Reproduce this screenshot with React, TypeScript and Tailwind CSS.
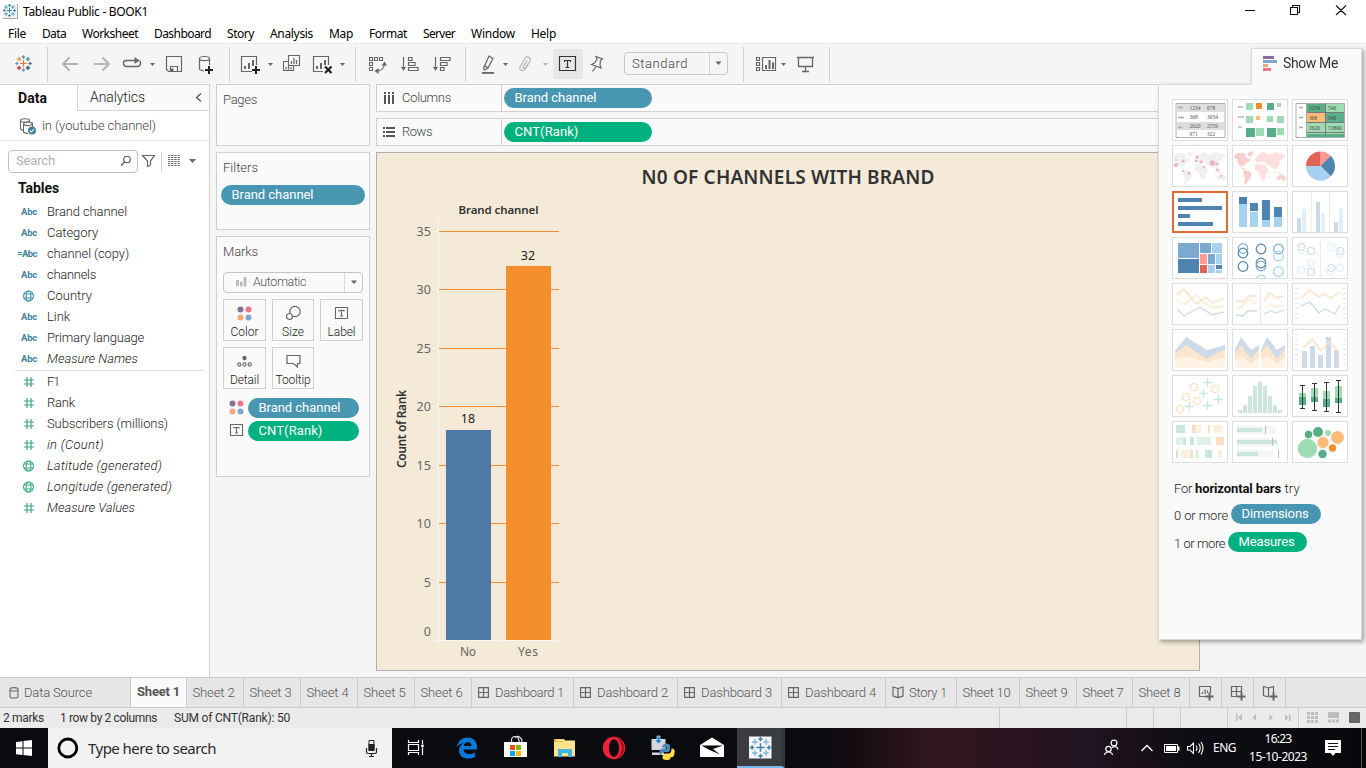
import { useLayoutEffect, useRef } from "react";
import type { ReactNode } from "react";

/* Text whose letter spacing is adjusted so that it takes exactly `w` pixels. */
function T({ w, c = "", children }: { w: number; c?: string; children: string }) {
  const ref = useRef<HTMLSpanElement>(null);
  useLayoutEffect(() => {
    const el = ref.current;
    if (!el) return;
    el.style.letterSpacing = "0px";
    const natural = el.getBoundingClientRect().width;
    el.style.letterSpacing = `${(w - natural) / children.length}px`;
  }, [w, children]);
  return (
    <span ref={ref} className={"inline-block shrink-0 whitespace-pre " + c}>
      {children}
    </span>
  );
}

/* Drawing whose coordinates are those of the window. */
function Art({ x, y, w, h, c = "", children }: { x: number; y: number; w: number; h: number; c?: string; children?: ReactNode }) {
  return (
    <svg className={"block shrink-0 " + c} width={w} height={h} viewBox={`${x} ${y} ${w} ${h}`} fill="none">
      {children}
    </svg>
  );
}

function Plus({ x, y, r, s, sw = 1.3 }: { x: number; y: number; r: number; s: string; sw?: number }) {
  return <path d={`M${x - r} ${y}H${x + r}M${x} ${y - r}V${y + r}`} stroke={s} strokeWidth={sw} />;
}

function Logo({ x, y, k, mono }: { x: number; y: number; k: number; mono?: string[] }) {
  const p: [number, number, number, string][] = [
    [0, 0, 3, "#e8762d"],
    [0, -6, 1.6, "#5b879b"],
    [0, 6, 1.6, "#7199a6"],
    [-6, 0, 1.6, "#7199a6"],
    [6, 0, 1.6, "#5b6591"],
    [-4, -4, 2, "#eb912c"],
    [4, -4, 2, "#59879b"],
    [-4, 4, 2, "#c72035"],
    [4, 4, 2, "#1f447e"],
  ];
  return (
    <g>
      {p.map(([a, b, r, s], i) => (
        <Plus key={i} x={x + a * k} y={y + b * k} r={r * k} s={mono ? mono[i > 4 ? 1 : 0] : s} sw={1.1 * k} />
      ))}
    </g>
  );
}

const G = "#666";

function Caret({ x, y, f = G, r = 3 }: { x: number; y: number; f?: string; r?: number }) {
  return <path d={`M${x - r} ${y}H${x + r}L${x} ${y + r + 0.5}Z`} fill={f} />;
}

function Toolbar() {
  return (
    <div className="flex h-[41px] shrink-0 border-t border-[#e9e9e9] bg-[#f5f5f5]">
      <Art x={0} y={44} w={47} h={40}>
        <Logo x={23.5} y={63.5} k={1.1} />
      </Art>
      <Sep />
      <Art x={48} y={44} w={36} h={40}>
        <path d="M78 64H63M69.500 57.500L63 64L69.500 70.500" stroke="#b4b4b4" strokeWidth="2" />
      </Art>
      <Art x={84} y={44} w={34} h={40}>
        <path d="M94 64H109M102.500 57.500L109 64L102.500 70.500" stroke="#b4b4b4" strokeWidth="2" />
      </Art>
      <Art x={118} y={44} w={42} h={40}>
        <path d="M135 60.500H126Q123.500 60.500 123.500 63Q123.500 66.500 127 66.500H137Q140.500 66.500 140.500 63Q140.500 61.500 139.500 61" stroke={G} strokeWidth="1.4" />
        <path d="M134.500 57L139.500 60.500L134.500 64Z" fill={G} />
        <Caret x={152.500} y={63} r={2.5} />
      </Art>
      <Art x={160} y={44} w={30} h={40}>
        <path d="M166.500 56.500H181.500V71.500H168.500L166.500 69.500ZM170.500 71.500V66.500H177.500V71.500" stroke={G} strokeWidth="1.2" />
        <path d="M171 68.500h2.500v3h-2.500z" fill={G} />
      </Art>
      <Art x={190} y={44} w={39} h={40}>
        <path d="M204 71C201 70.500 199.500 69.800 199.500 69V58.500C199.500 57.300 201.500 56.500 204.500 56.500S209.500 57.300 209.500 58.500V65M199.500 58.800C199.500 60 202 60.700 204.500 60.700S209.500 60 209.500 58.800" stroke={G} strokeWidth="1.2" />
        <Plus x={209} y={70} r={4} s="#222" sw={2} />
      </Art>
      <Sep />
      <Art x={230} y={44} w={50} h={40}>
        <path d="M252 71.500H241.500V56.500H256.500V65" stroke={G} strokeWidth="1.2" />
        <path d="M244 66h2v3h-2zM248 63h2v6h-2zM252 60h2v6h-2z" fill={G} />
        <Plus x={256} y={70} r={4} s="#222" sw={2} />
        <Caret x={270.500} y={63} r={2.5} />
      </Art>
      <Art x={280} y={44} w={26} h={40}>
        <path d="M288.500 55.500H299.500V65.500H288.500ZM288 61.500H283.500V70.500H293.500V66" stroke={G} strokeWidth="1.100" />
        <path d="M291.500 61v3M294 58v6M296.500 60v4M286 67v2.500M288.500 65.500v4M291 67v2.500" stroke={G} strokeWidth="1.2" />
      </Art>
      <Art x={306} y={44} w={49} h={40}>
        <path d="M323 71.500H313.500V56.500H328.500V65" stroke={G} strokeWidth="1.2" />
        <path d="M316 66h2v3h-2zM320 63h2v6h-2zM324 60h2v5h-2z" fill={G} />
        <path d="M325 66.500L331.500 73M331.500 66.500L325 73" stroke="#222" strokeWidth="2.2" />
        <Caret x={342.500} y={63} r={2.500} />
      </Art>
      <Sep />
      <Art x={356} y={44} w={38} h={40}>
        <path d="M369.500 57.500h3v3h-3zM374.500 57.500h3v3h-3zM379.500 57.500h3v3h-3zM369.500 62.500h3v3h-3zM369.500 67.500h3v3h-3z" stroke={G} strokeWidth="1.100" />
        <path d="M384.500 64C384 68 381 71 376.500 71" stroke={G} strokeWidth="1.2" />
        <path d="M381.500 65.500L384.700 61.500L387 65.500ZM378.500 68L374.500 71L378.500 74Z" fill={G} />
      </Art>
      <Art x={394} y={44} w={32} h={40}>
        <path d="M403.500 57V69M408.500 57.500h3.500v3h-3.500zM408.500 62.500h6.500v3h-6.500zM408.500 67.500h9.500v3h-9.500z" stroke={G} strokeWidth="1.2" />
        <path d="M401 67H406L403.500 71Z" fill={G} />
      </Art>
      <Art x={426} y={44} w={39} h={40}>
        <path d="M435.500 57V69M440.500 57.500h9.500v3h-9.500zM440.500 62.500h6.500v3h-6.500zM440.500 67.500h3.500v3h-3.500z" stroke={G} strokeWidth="1.2" />
        <path d="M433 67H438L435.500 71Z" fill={G} />
      </Art>
      <Sep />
      <Art x={466} y={44} w={46} h={40}>
        <path d="M489 56L493 58.500L488 68L484.500 70L483.500 68.500L484.500 66ZM484.500 65.500L488 68" stroke={G} strokeWidth="1.2" />
        <path d="M482 72h12v1.800h-12z" fill={G} />
        <Caret x={505.500} y={63} r={2.500} />
      </Art>
      <Art x={512} y={44} w={41} h={40}>
        <path d="M528.500 63L524.500 69.500C523 72 518.500 70 520 67L525 58.500C526.500 55.500 531.500 57.500 530 61L526 68C525 69.500 522.500 68.500 523.300 67L527 60.500" stroke="#b4b4b4" strokeWidth="1.2" />
        <Caret x={545.500} y={63} r={2.500} f="#b4b4b4" />
      </Art>
      <div className="mt-[5px] h-[30px] w-[30px] bg-[#e6e6e6]">
        <Art x={553} y={49} w={30} h={30}>
          <path d="M559.500 56.500H575.500V70.500H559.500Z" stroke="#333" strokeWidth="1.200" />
          <path d="M564.500 62V60.500H570.500V62M567.500 60.500V67.500M565.500 67.500H569.500" stroke="#333" strokeWidth="1.200" />
        </Art>
      </div>
      <Art x={583} y={44} w={41} h={40}>
        <path d="M596 56.500L602.500 59L600.500 60.500L600 65L601 68L591.500 64.500L594.500 63L597 59.500ZM596 66.500L592.500 71.500" stroke={G} strokeWidth="1.200" />
      </Art>
      <div className="mt-2 flex h-[23px] w-[104px] items-center rounded-sm border border-[#c8c8c8] text-[13px] text-[#444]">
        <div className="w-[84px] pl-[7px]">
          <T w={56}>Standard</T>
        </div>
        <div className="flex h-full w-[18px] items-center justify-center border-l border-[#d4d4d4]">
          <Art x={715} y={61} w={7} h={5}>
            <Caret x={718.500} y={61.500} />
          </Art>
        </div>
      </div>
      <Art x={728} y={44} w={15} h={40} />
      <Sep />
      <Art x={744} y={44} w={49} h={40}>
        <path d="M756.500 57.500h3v3h-3zM756.500 62.500h3v3h-3zM756.500 67.500h3v3h-3zM762.500 57.500H775.500V70.500H762.500Z" stroke={G} strokeWidth="1.2" />
        <path d="M765 65h2v4h-2zM768.500 60h2v9h-2zM772 62.500h2v6.500h-2z" fill={G} />
        <Caret x={783.500} y={63} r={2.5} />
      </Art>
      <Art x={793} y={44} w={36} h={40}>
        <path d="M797 57.500H814M798.500 58V66.500H812.500V58M805.500 66.500V71.500M802 71.500H809" stroke={G} strokeWidth="1.3" />
      </Art>
      <Sep />
    </div>
  );
}

function Sep() {
  return <div className="mt-[3px] h-[35px] w-px shrink-0 bg-[#cfcfcf]" />;
}

const menus: [string, number][] = [
  ["File", 18], ["Data", 24], ["Worksheet", 56], ["Dashboard", 57], ["Story", 27], ["Analysis", 43],
  ["Map", 24], ["Format", 38], ["Server", 32], ["Window", 44], ["Help", 25],
];

type Kind = "abc" | "eabc" | "geo" | "num" | "ngeo";
const dims: [Kind, string, number, boolean?][] = [
  ["abc", "Brand channel", 80], ["abc", "Category", 51], ["eabc", "channel (copy)", 82], ["abc", "channels", 49],
  ["geo", "Country", 45], ["abc", "Link", 23], ["abc", "Primary language", 97], ["abc", "Measure Names", 91, true],
];
const meas: [Kind, string, number, boolean?][] = [
  ["num", "F1", 12], ["num", "Rank", 28], ["num", "Subscribers (millions)", 121], ["num", "in (Count)", 57, true],
  ["ngeo", "Latitude (generated)", 115, true], ["ngeo", "Longitude (generated)", 125, true], ["num", "Measure Values", 88, true],
];

function Field({ k, n, w, it }: { k: Kind; n: string; w: number; it?: boolean }) {
  return (
    <div className="flex h-[21px] items-center">
      <div className="flex w-[47px] items-center justify-end pr-[10px]">
        {k === "abc" || k === "eabc" ? (
          <T w={k === "abc" ? 16 : 20} c="mt-px text-[9.5px] font-bold text-[#3f829d]">{k === "abc" ? "Abc" : "=Abc"}</T>
        ) : k === "num" ? (
          <Art x={0} y={0} w={14} h={12}>
            <path d="M1 4H11M1 8H11M4 1V11M8 1V11" stroke="#3fa37f" strokeWidth="1.200" />
          </Art>
        ) : (
          <Art x={0} y={0} w={15} h={12}>
            <g stroke={k === "geo" ? "#4792ae" : "#3fae85"} strokeWidth="1.100">
              <circle cx="6.500" cy="6" r="5" />
              <ellipse cx="6.500" cy="6" rx="2.400" ry="5" />
              <path d="M2 4H11M2 8H11" />
            </g>
          </Art>
        )}
      </div>
      <T w={w} c={it ? "italic" : ""}>{n}</T>
    </div>
  );
}

function DataPane() {
  return (
    <div className="flex w-[210px] shrink-0 flex-col border-r border-[#cfcfcf] bg-white text-[13px] text-[#222]">
      <div className="flex h-[27px] border-t border-[#d4d4d4]">
        <div className="flex w-[77px] shrink-0 items-center pl-[18px] text-[14px] font-bold text-[#111]">
          <T w={29}>Data</T>
        </div>
        <div className="flex flex-1 items-center justify-between border-b border-l border-[#d4d4d4] bg-[#fafafa] pl-3 text-[14px]">
          <T w={55}>Analytics</T>
          <Art x={190} y={90} w={19} h={14}>
            <path d="M201 92.500L196.500 96.500L201 100.500" stroke="#555" strokeWidth="1.3" />
          </Art>
        </div>
      </div>
      <div className="flex h-[30px] items-center border-b border-[#e2e2e2] pl-[19px] text-[#444]">
        <Art x={19} y={114} w={23} h={22}>
          <g stroke={G} strokeWidth="1.100">
            <ellipse cx="25" cy="119.500" rx="4.500" ry="1.800" />
            <path d="M20.500 119.500V127.500Q21 129 23.500 129.500M29.500 119.500V121M23.500 123V131Q25 132.500 28 132.500M23.500 123.500Q28 126 32.500 123M32.500 121.500V126M23.500 123Q24 120.800 28 121Q32 121 32.500 123" />
          </g>
          <circle cx="32" cy="129.500" r="4" fill="#3f829d" />
          <path d="M30 129.500L31.500 131L34 128" stroke="#fff" strokeWidth="1.100" />
        </Art>
        <T w={114}>in (youtube channel)</T>
      </div>
      <div className="flex h-[37px] items-center pl-2">
        <div className="mt-[3px] flex h-[23px] w-[130px] items-center justify-between rounded-sm border border-[#c0c0c0] pl-[7px] font-normal text-[#b0b0b0]">
          <T w={39}>Search</T>
          <Art x={118} y={152} w={19} h={17}>
            <circle cx="127" cy="158.500" r="3.300" stroke="#555" strokeWidth="1.100" />
            <path d="M124.500 161L121 164.500" stroke="#555" strokeWidth="1.300" />
          </Art>
        </div>
        <Art x={138} y={150} w={24} h={20} c="mt-[2px]">
          <path d="M142.500 154.500H154.500L150.500 160V164L147.500 165.500V160Z" stroke={G} strokeWidth="1.200" />
          <path d="M161.500 151V170" stroke="#cfcfcf" />
        </Art>
        <Art x={162} y={150} w={40} h={20} c="mt-[2px]">
          <path d="M168 154.500H180M168 156.500H180M168 158.500H180M168 160.500H180M168 162.500H180M168 164.500H180" stroke={G} strokeDasharray="2.200 1" />
          <Caret x={192.500} y={158} r={3.500} />
        </Art>
      </div>
      <div className="flex h-[23px] items-center pb-[2px] pl-[18px] text-[14px] font-bold text-[#111]">
        <T w={41}>Tables</T>
      </div>
      {dims.map(([k, n, w, it]) => (
        <Field key={n} k={k} n={n} w={w} it={it} />
      ))}
      <div className="mr-[6px] ml-[15px] h-[2px] border-b border-[#dcdcdc]" />
      {meas.map(([k, n, w, it]) => (
        <Field key={n} k={k} n={n} w={w} it={it} />
      ))}
    </div>
  );
}

function Pill({ c, w, children }: { c: string; w: number; children: string }) {
  return (
    <div className={"flex h-5 shrink-0 items-center rounded-full pl-[10.5px] text-[13px] font-normal text-white " + c}>
      <T w={w}>{children}</T>
    </div>
  );
}

function Dots({ c = "" }: { c?: string }) {
  return (
    <Art x={0} y={0} w={15} h={15} c={c}>
      <circle cx="3.500" cy="3.500" r="3" fill="#8a6f9e" />
      <circle cx="11.500" cy="3.500" r="3" fill="#fb7185" />
      <circle cx="3.500" cy="11.500" r="3" fill="#f4a77c" />
      <circle cx="11.500" cy="11.500" r="3" fill="#7fa6cf" />
    </Art>
  );
}

function TBox() {
  return (
    <Art x={0} y={0} w={15} h={15}>
      <path d="M1.500 1.500H13.500V12.500H1.500Z" stroke={G} strokeWidth="1.100" />
      <path d="M5 5.500V4.500H10V5.500M7.500 4.500V10M6 10H9" stroke={G} strokeWidth="1.100" />
    </Art>
  );
}

function MarkBtn({ icon, n, w, c }: { icon: ReactNode; n: string; w: number; c: string }) {
  return (
    <div className={"flex h-[42px] flex-col items-center border border-[#d0d0d0] bg-[#fafafa] pt-[5px] " + c}>
      <div className="flex h-[17px] items-center">{icon}</div>
      <T w={w} c="mt-[2px] text-[12px] leading-4">{n}</T>
    </div>
  );
}

function Cards() {
  return (
    <div className="ml-[6px] flex w-[154px] shrink-0 flex-col gap-[6px] text-[13px] text-[#444]">
      <div className="h-[62px] border border-[#d0d0d0] bg-[#fafafa] px-[6px] pt-[5px]">
        <T w={34}>Pages</T>
      </div>
      <div className="h-[78px] border border-[#d0d0d0] bg-[#fafafa] px-1 pt-[5px]">
        <T w={35} c="ml-[2px]">Filters</T>
        <Pill c="mt-[7px] bg-[#4996b2]" w={82}>Brand channel</Pill>
      </div>
      <div className="h-[241px] border border-[#d0d0d0] bg-[#fafafa] px-[6px] pt-[5px]">
        <T w={35}>Marks</T>
        <div className="mt-[10px] flex h-[21px] items-center rounded-sm border border-[#c4c4c4]">
          <Art x={0} y={0} w={29} h={20}>
            <path d="M12.500 8.500h2v5h-2zM16.500 10h1.500v4h-1.500zM20 5.500h2v8.500h-2z" stroke="#b5b5b5" strokeWidth="1" fill="#c9c9c9" />
          </Art>
          <div className="w-[91px] text-[12.500px] text-[#555]">
            <T w={53}>Automatic</T>
          </div>
          <div className="flex h-full flex-1 items-center justify-center border-l border-[#d8d8d8]">
            <Art x={0} y={0} w={8} h={5}>
              <Caret x={4} y={0.500} />
            </Art>
          </div>
        </div>
        <div className="mt-[6px] flex gap-[6px] text-[#222]">
          <MarkBtn c="w-[43px]" n="Color" w={28} icon={<Dots />} />
          <MarkBtn
            c="w-[42px]" n="Size" w={22}
            icon={
              <Art x={0} y={0} w={15} h={16}>
                <circle cx="9" cy="6.500" r="5.200" stroke={G} strokeWidth="1.200" />
                <circle cx="3.500" cy="11.500" r="3" stroke={G} strokeWidth="1.200" fill="#fafafa" />
              </Art>
            }
          />
          <MarkBtn c="w-[43px]" n="Label" w={28} icon={<TBox />} />
        </div>
        <div className="mt-[6px] flex gap-[6px] text-[#222]">
          <MarkBtn
            c="w-[43px]" n="Detail" w={29}
            icon={
              <Art x={0} y={0} w={15} h={14}>
                <circle cx="7.500" cy="4" r="2.200" fill={G} />
                <g stroke={G} strokeWidth="1.100">
                  <circle cx="2.300" cy="10.500" r="1.600" />
                  <circle cx="7.500" cy="10.500" r="1.600" />
                  <circle cx="12.700" cy="10.500" r="1.600" />
                </g>
              </Art>
            }
          />
          <MarkBtn
            c="w-[42px]" n="Tooltip" w={35}
            icon={
              <Art x={0} y={0} w={15} h={14}>
                <path d="M1 1.500H14V9.500H11.500V13L7.500 9.500H1Z" stroke={G} strokeWidth="1.200" />
              </Art>
            }
          />
        </div>
        <div className="mt-[9px] flex items-center pl-[6px]">
          <Dots />
          <Pill c="ml-1 w-[111px] bg-[#4996b2]" w={82}>Brand channel</Pill>
        </div>
        <div className="mt-[3px] flex items-center pl-[6px]">
          <TBox />
          <Pill c="ml-1 w-[111px] bg-[#00b180]" w={64}>CNT(Rank)</Pill>
        </div>
      </div>
    </div>
  );
}

function Shelf({ n, w, icon, children }: { n: string; w: number; icon: ReactNode; children: ReactNode }) {
  return (
    <div className="mr-2 flex h-7 shrink-0 border border-[#d0d0d0] bg-[#fafafa]">
      <div className="flex w-[125px] items-center border-r border-[#d0d0d0] pl-[6px] text-[13px] text-[#444]">
        {icon}
        <T w={w} c="ml-[7px]">{n}</T>
      </div>
      <div className="flex items-center pl-[2px]">{children}</div>
    </div>
  );
}

const grid: [number, number][] = [
  [35, 231.5], [30, 289.5], [25, 348.5], [20, 406.5], [15, 465.5], [10, 523.5], [5, 582.5],
];

function Chart() {
  return (
    <Art x={377} y={198} w={822} h={472}>
      <g fontFamily="'Noto Sans', sans-serif" fontSize="12.500" fontWeight="400">
        {grid.map(([v, y]) => (
          <g key={v}>
            <path d={`M439 ${y}H559`} stroke="#f58e2d" />
            <path d={`M433 ${y}H438`} stroke="#f8f5f0" />
            <text x={431} y={y + 4.500} textAnchor="end" fill="#666" textLength={v > 5 ? 14.500 : 7}>{v}</text>
          </g>
        ))}
        <text x={431} y={636} textAnchor="end" fill="#666">0</text>
        <path d="M438.500 219V644M433 640.500H559M498.500 640V644M558.500 640V644" stroke="#f8f5f2" />
        <path d="M446 430h45v210h-45z" fill="#4e79a7" />
        <path d="M506 266h45v374h-45z" fill="#f58e2c" />
        <text x={468} y={423} textAnchor="middle" fill="#222">18</text>
        <text x={528} y={260} textAnchor="middle" fill="#222">32</text>
        <text x={460} y={656} fill="#666" fontSize="12" textLength="16">No</text>
        <text x={518} y={656} fill="#666" fontSize="12" textLength="20">Yes</text>
        <text x={458.500} y={214} fill="#333" fontSize="11.500" fontWeight="600" textLength="80">Brand channel</text>
        <text transform="translate(406 468) rotate(-90)" fill="#333" fontSize="12" fontWeight="600" textLength="78">Count of Rank</text>
      </g>
    </Art>
  );
}

const america = "M1 6L4 3L10 3L13 5L12 7L15 8L18 10L15 12L12 14L11 17L9 15L8 18L11 18L12 20L9 19L5 14L4 9L1 8ZM14 3L21 1L20 4L16 7ZM11 20L16 21L19 24L17 29L14 32L13 35L11 33L12 28L10 24Z";
const rest = "M22 9L25 5L30 2L33 3L36 5L42 2L52 5L53 7L49 8L50 11L46 10L47 14L44 18L43 20L41 17L38 18L37 15L34 15L32 12L27 12L23 13ZM22 15L27 14L32 15L34 19L36 20L33 24L32 29L29 30L27 26L26 22L22 20ZM40 20L44 23L48 22L48 24L42 23ZM35 25L36 27L35 28Z";
const oz = "M44 27L47 25L50 24L53 28L51 31L48 29L44 30Z";

function thumbArt(i: number): ReactNode {
  const s = 1.3;
  switch (i) {
    case 0:
      return (
        <g>
          <path d="M3 3.500H52V37.500H3Z" fill="#fff" stroke="#b0b0b0" />
          <path d="M4 4h47v8h-47zM4 22h47v8h-47z" fill="#dedede" />
          <path d="M5 7.500H10M5 17.500H11M5 27.500H9" stroke="#aaa" strokeWidth="1.500" />
          <g fontFamily="'Liberation Serif'" fontSize="5.500" fill="#555">
            <text x="16.500" y="10">1234</text><text x="34" y="10">678</text>
            <text x="16.500" y="19">368</text><text x="34" y="19">3034</text>
            <text x="16.500" y="28">2620</text><text x="34" y="28">2559</text>
            <text x="16.500" y="36">971</text><text x="34" y="36">322</text>
          </g>
        </g>
      );
    case 1:
      return (
        <g>
          <path d="M5 7H10M5 17H11M5 27H9" stroke="#bbb" strokeWidth="1.500" />
          <path d="M13 3h7v7h-7zM44 3h4v4h-4zM13 16h7v7h-7zM34 16h6v6h-6zM44 16h7v7h-7zM23 28h8v8h-8zM44 28h7v7h-7z" fill="#9fdcb4" />
          <path d="M34 3h7v7h-7zM13 28h9v9h-9zM34 28h9v9h-9z" fill="#57ae89" />
          <path d="M23 3h6v6h-6z" fill="#f58e2c" />
          <path d="M23 16h4v4h-4z" fill="#ffbc78" />
        </g>
      );
    case 2:
      return (
        <g>
          <path d="M14 3h19v10h-19zM33 13h18v10h-18zM14 34h37v3h-37z" fill="#57ae89" />
          <path d="M33 3h18v10h-18zM14 23h37v11h-37z" fill="#9fdcb4" />
          <path d="M14 13h19v10h-19z" fill="#ffbc78" />
          <path d="M3 3.500H51.500V37.500H3ZM13.500 3V37" stroke="#aaa" />
          <path d="M14 12.500H51M14 22.500H51M14 32.500H51M32.500 3V37" stroke="#777" />
          <path d="M6 7.500H10M6 17.500H10M6 27.500H10" stroke="#aaa" strokeWidth="1.500" />
          <g fontFamily="'Liberation Serif'" fontSize="5.500" fill="#444">
            <text x="16" y="10">1234</text><text x="35" y="10">546</text>
            <text x="16" y="20">368</text><text x="35" y="20">340</text>
            <text x="16" y="30">2620</text><text x="35" y="30">53890</text>
          </g>
        </g>
      );
    case 3:
      return (
        <g>
          <g transform="translate(0 4)"><path d={america + rest + oz} fill="#f0f0f0" /></g>
          <g fill="#e79aa4" opacity=".65">
            <circle cx="3" cy="19" r="2.200" /><circle cx="10" cy="15" r="1.600" /><circle cx="3" cy="14" r="1.200" /><circle cx="10" cy="25" r="1.300" />
            <circle cx="16" cy="27" r="1.600" /><circle cx="24" cy="11" r="1.700" /><circle cx="23" cy="15" r="1.400" /><circle cx="28" cy="16" r="1.800" />
            <circle cx="39.500" cy="17" r="2.700" /><circle cx="44" cy="18" r="1.500" /><circle cx="44.500" cy="24" r="1.800" /><circle cx="31" cy="21" r="1.200" /><circle cx="48" cy="30" r="1.200" />
          </g>
        </g>
      );
    case 4:
      return (
        <g transform="translate(0 4)">
          <path d={rest} fill="#ffdedd" />
          <path d={america + oz} fill="#f8cfcd" />
        </g>
      );
    case 5:
      return (
        <g>
          <path d="M27.500 20V5.500A14.500 14.500 0 0 1 37.750 9.750Z" fill="#ff9a94" />
          <path d="M27.500 20L37.750 9.750A14.500 14.500 0 0 1 37.750 30.250Z" fill="#4e84b0" />
          <path d="M27.500 20L37.750 30.250A14.500 14.500 0 0 1 13 20Z" fill="#a6d1f0" />
          <path d="M27.500 20H13A14.500 14.500 0 0 1 27.500 5.500Z" fill="#e06358" />
        </g>
      );
    case 6:
      return <path d="M5 6h24v4h-24zM5 14h44v4h-44zM5 22h12v4h-12zM5 30h35v4h-35z" fill="#4e84b0" />;
    case 7:
      return (
        <g>
          <path d="M6 12h8v23h-8zM17 20h8v15h-8zM29 28h8v7h-8zM41 25h8v10h-8z" fill="#a6d1f0" />
          <path d="M6 5h8v7h-8zM17 11h8v8h-8zM29 8h8v20h-8zM41 15h8v10h-8z" fill="#4e84b0" />
        </g>
      );
    case 8:
      return (
        <g>
          <path d="M18.500 0V40M36.500 0V40" stroke="#ececec" />
          <path d="M4 26h4v14h-4zM23 10h4v30h-4zM41 30h4v10h-4z" fill="#cddbe8" />
          <path d="M9 17h4v23h-4zM28 21h4v19h-4zM46 16h4v24h-4z" fill="#e0effb" />
        </g>
      );
    case 9:
      return (
        <g>
          <path d="M5 5h21v15h-21zM27 5h11v10h-11zM35 16h7v10h-7z" fill="#7ba9cf" />
          <path d="M5 21h21v14h-21zM43 27h6v4h-6z" fill="#4e84b0" />
          <path d="M39 5h10v10h-10zM43 16h6v10h-6zM35 27h7v8h-7zM43 32h6v3h-6z" fill="#a6d1f0" />
          <path d="M27 16h7v10h-7z" fill="#ff9a94" />
          <path d="M27 27h7v8h-7z" fill="#e06358" />
        </g>
      );
    case 10:
      return (
        <g strokeWidth="1.200">
          <g stroke="#4e84b0"><circle cx="10" cy="15" r="4.800" /><circle cx="10" cy="28.500" r="4.800" /><circle cx="28" cy="11" r="4.800" /><circle cx="28" cy="25" r="4.800" /></g>
          <g stroke="#7ba9cf"><circle cx="10" cy="10.500" r="4.800" /><circle cx="28" cy="28" r="4.800" /><circle cx="45.500" cy="11" r="4.800" /></g>
          <g stroke="#a6d1f0"><circle cx="28" cy="42" r="4.800" /><circle cx="45.500" cy="18" r="4.800" /><circle cx="45.500" cy="33.500" r="4.800" /></g>
        </g>
      );
    case 11:
      return (
        <g strokeWidth="1.200">
          <path d="M27.500 1V40" stroke="#eee" />
          <g stroke="#cddbe8"><circle cx="8.500" cy="9" r="3.500" /><circle cx="18" cy="13" r="3.500" /><circle cx="18" cy="34" r="3.500" /><circle cx="47.500" cy="13" r="3.500" /><circle cx="38.500" cy="30" r="3.500" /></g>
          <g stroke="#e3f0fa"><circle cx="8" cy="12" r="3.500" /><circle cx="18" cy="25" r="3.500" /><circle cx="8" cy="32" r="3.500" /><circle cx="38" cy="9" r="3.500" /><circle cx="47" cy="16" r="3.500" /><circle cx="47" cy="30" r="3.500" /><circle cx="37" cy="33" r="3.500" /></g>
        </g>
      );
    case 12:
      return (
        <g strokeWidth={s}>
          <path d="M4 17L11 20L23 11L30 18L40 24L51 22" stroke="#fdeccb" />
          <path d="M4 11L11 5L23 20L33 13L39 19L51 14" stroke="#fde0c2" />
          <path d="M4 25L11 32L27 23L39 31L51 28" stroke="#cddbe8" />
        </g>
      );
    case 13:
      return (
        <g strokeWidth={s}>
          <path d="M27.500 1V40" stroke="#e8e8e8" />
          <path d="M3 17L10 18L16 12L24 12M31 17L37 9L43 14L51 12" stroke="#fde0c2" />
          <path d="M3 24L9 23L15 15L24 20M31 24L38 21L43 23L51 21" stroke="#fdeccb" />
          <path d="M3 31L10 32L15 27L24 27M31 30L38 27L43 29L51 26" stroke="#cddbe8" />
        </g>
      );
    case 14:
    case 17:
      return (
        <g>
          <path d="M3.500 4V38M51.500 4V38" stroke="#e4e4e4" strokeWidth="3" strokeDasharray="1 4" />
          {i === 14 ? (
            <g strokeWidth={s}>
              <path d="M8 14L17 6L26 13L31 10L38 14L47 8" stroke="#fde0c2" />
              <path d="M8 22L17 18L26 29L32 25L42 30L47 21" stroke="#cddbe8" />
            </g>
          ) : (
            <g>
              <path d="M9 21h5v17h-5zM17 16h5v22h-5zM25 25h5v13h-5zM33 7h5v31h-5zM41 20h5v18h-5z" fill="#cddbe8" />
              <path d="M10 18L19 9L28 21L36 12L46 22" stroke="#fde0c2" strokeWidth={s} />
            </g>
          )}
        </g>
      );
    case 15:
      return (
        <g>
          <path d="M2 21L13 7L34 20L52 15V38H2Z" fill="#cddbe8" />
          <path d="M2 23L13 15L34 29L52 19V38H2Z" fill="#fde4cb" />
          <path d="M2 29L13 26L34 32L52 27V38H2Z" fill="#fff3e6" />
        </g>
      );
    case 16:
      return (
        <g>
          <path d="M2 20L8 7L18 20L26 15V38H2ZM28 20L34 7L44 20L52 15V38H28Z" fill="#cddbe8" />
          <path d="M2 23L8 15L18 29L26 19V38H2ZM28 23L34 15L44 29L52 19V38H28Z" fill="#fde4cb" />
          <path d="M2 30L8 26L18 33L26 27V38H2ZM28 30L34 26L44 33L52 27V38H28Z" fill="#fff3e6" />
        </g>
      );
    case 18:
      return (
        <g strokeWidth="1.400">
          <g stroke="#fde0c2"><circle cx="21" cy="11" r="3.600" /><circle cx="42" cy="13" r="3.600" /><circle cx="13" cy="21" r="3.600" /><circle cx="24" cy="25" r="3.600" /><circle cx="7" cy="33" r="3.600" /></g>
          <Plus x={34.500} y={6.500} r={4.500} s="#cbe6db" /><Plus x={30.500} y={17.500} r={4.500} s="#cbe6db" /><Plus x={45.500} y={23.500} r={4.500} s="#cbe6db" />
          <Plus x={16.500} y={30.500} r={4.500} s="#cbe6db" /><Plus x={34.500} y={29.500} r={4.500} s="#cbe6db" />
        </g>
      );
    case 19:
      return <path d="M5 34h4v3h-4zM10 29h4v8h-4zM15 20h4v17h-4zM20 10h4v27h-4zM25 6h4v31h-4zM30 10h4v27h-4zM35 20h4v17h-4zM40 29h4v8h-4zM45 34h4v3h-4z" fill="#cbe6db" />;
    case 20:
      return (
        <g>
          <path d="M6 17h7v5h-7zM18 12h7v9h-7zM30 15h7v8h-7zM42 10h7v12h-7z" fill="#9fdcb4" />
          <path d="M6 21h7v8h-7zM18 21h7v5h-7zM30 23h7v8h-7zM42 22h7v5h-7z" fill="#57ae89" />
          <path d="M9.500 9V32M7 9.500H12M7 32.500H12M21.500 7V34M19 7.500H24M19 34.500H24M33.500 6V35M31 6.500H36M31 35.500H36M45.500 4V36M43 4.500H48M43 36.500H48" stroke="#333" strokeWidth="1" />
        </g>
      );
    case 21:
      return (
        <g>
          <path d="M3 3h9v8h-9zM10 15h3v8h-3zM17 15h4v8h-4zM3 28h2v8h-2zM17 28h3v8h-3zM32 28h7v8h-7z" fill="#cbe6db" />
          <path d="M3 15h6v8h-6zM24 15h14v8h-14zM22 28h4v8h-4z" fill="#e0f1e6" />
          <path d="M19 3h4v8h-4zM35 3h2v8h-2zM43 15h8v8h-8zM18 28h2v8h-2z" fill="#fddcc0" />
          <path d="M24 3h4v8h-4zM41 3h8v8h-8zM8 28h8v8h-8zM45 28h4v8h-4z" fill="#ffeedd" />
        </g>
      );
    case 22:
      return (
        <g>
          <path d="M4 4h39v8h-39zM4 16h40v8h-40zM4 28h36v8h-36z" fill="#f6f6f6" />
          <path d="M4 6h25v4h-25zM4 18h40v4h-40zM4 30h21v4h-21z" fill="#cbe6db" />
          <path d="M32.500 4V12M39.500 16V24M45.500 28V36" stroke="#bbb" />
        </g>
      );
    default:
      return (
        <g>
          <g fill="#9fdcb4"><circle cx="14.500" cy="26.500" r="9.700" /><circle cx="35" cy="11" r="3" /></g>
          <g fill="#57ae89"><circle cx="15.500" cy="12.500" r="3.700" /><circle cx="25" cy="10" r="5" /><circle cx="29.500" cy="32" r="4.200" /></g>
          <g fill="#ffbc78"><circle cx="30" cy="20.500" r="5.700" /><circle cx="44.500" cy="15.500" r="6.500" /></g>
          <circle cx="39.500" cy="26" r="3.700" fill="#f58e2c" />
        </g>
      );
  }
}

function ShowMe() {
  return (
    <div className="absolute top-[48px] left-[1158px] w-[204px] drop-shadow-[2px_2px_2px_rgba(0,0,0,0.35)]">
      <div className="relative z-10 ml-[93px] flex h-[37px] items-center border border-b-0 border-[#dadada] bg-[#fafafa] pl-[11px]">
        <Art x={0} y={0} w={14} h={15} c="-mt-[7px]">
          <path d="M0 0h11v3h-11z" fill="#8a6f9e" />
          <path d="M0 4h14v3h-14z" fill="#7fa6cf" />
          <path d="M0 8h5v3h-5z" fill="#f4a77c" />
          <path d="M0 12h8v3h-8z" fill="#fb7185" />
        </Art>
        <T w={55} c="-mt-[7px] ml-[6px] text-[14px] font-normal text-[#333]">Show Me</T>
      </div>
      <div className="-mt-px h-[556px] border border-[#dadada] bg-[#fafafa] pt-[14px] pl-[13px]">
        <div className="grid grid-cols-[56px_56px_56px] gap-1">
          {Array.from({ length: 24 }, (_, i) => (
            <div key={i} className={i === 6 ? "h-[42px] border-2 border-[#dd6c37] bg-white" : "h-[42px] border border-[#dedede] bg-white"}>
              <Art x={i === 6 ? 1 : 0} y={i === 6 ? 1 : 0} w={i === 6 ? 52 : 54} h={i === 6 ? 38 : 40}>
                {thumbArt(i)}
              </Art>
            </div>
          ))}
        </div>
        <div className="mt-[15px] pl-[2px] text-[13px] text-[#222]">
          <div className="flex h-[22px] items-center">
            <T w={21}>For </T>
            <T w={86} c="font-bold text-[#111]">horizontal bars</T>
            <T w={19}> try</T>
          </div>
          <div className="mt-[4px] flex h-5 items-center">
            <T w={54} c="mt-1">0 or more</T>
            <Pill c="ml-[3px] w-[90px] bg-[#4996b2]" w={67}>Dimensions</Pill>
          </div>
          <div className="mt-2 flex h-5 items-center">
            <T w={51} c="mt-1">1 or more</T>
            <Pill c="ml-[3px] w-[79px] bg-[#00b180]" w={56}>Measures</Pill>
          </div>
        </div>
      </div>
    </div>
  );
}

function GridIco() {
  return (
    <Art x={0} y={0} w={17} h={12}>
      <path d="M.6 .6H10.400V10.400H.6ZM5.500 0V11M0 5.500H11" stroke={G} strokeWidth="1.200" />
    </Art>
  );
}
function BookIco() {
  return (
    <Art x={0} y={0} w={17} h={13}>
      <path d="M6 2.500L1 1V10L6 11.500L11 10V1ZM6 2.500V11.500" stroke={G} strokeWidth="1.200" />
    </Art>
  );
}

const tabs: [string, number, string, string?][] = [
  ["Sheet 2", 42, "w-[57px]"], ["Sheet 3", 42, "w-[57px]"], ["Sheet 4", 42, "w-[57px]"], ["Sheet 5", 42, "w-[57px]"], ["Sheet 6", 42, "w-[57px]"],
  ["Dashboard 1", 69, "w-[102px]", "g"], ["Dashboard 2", 71, "w-[104px]", "g"], ["Dashboard 3", 71, "w-[104px]", "g"], ["Dashboard 4", 71, "w-[104px]", "g"],
  ["Story 1", 38, "w-[71px]", "b"], ["Sheet 10", 48, "w-[63px]"], ["Sheet 9", 42, "w-[57px]"], ["Sheet 7", 41, "w-[56px]"], ["Sheet 8", 42, "w-[57px]"],
];

function Tabs() {
  return (
    <div className="flex h-[31px] shrink-0 border-y border-[#cbcbcb] bg-[#e6e6e6] text-[13px] text-[#555]">
      <div className="flex w-[131px] items-center border-r border-[#cbcbcb] pl-[9px]">
        <Art x={0} y={0} w={15} h={12}>
          <path d="M1 2.500Q1 .6 5 .6T9 2.500V9.500Q9 11 5 11T1 9.500ZM1 2.500Q1 4 5 4T9 2.500" stroke={G} strokeWidth="1.100" />
        </Art>
        <T w={68}>Data Source</T>
      </div>
      <div className="flex w-[56px] items-center justify-center border-r border-[#cbcbcb] bg-[#fafafa] font-bold text-[#555]">
        <T w={43} c="-mt-[2px]">Sheet 1</T>
      </div>
      {tabs.map(([n, w, c, ic]) => (
        <div key={n} className={"flex items-center justify-center border-r border-[#cbcbcb] pr-[3px] " + c}>
          {ic === "g" && <GridIco />}
          {ic === "b" && <BookIco />}
          <T w={w}>{n}</T>
        </div>
      ))}
      {[0, 1, 2].map((i) => (
        <div key={i} className="flex w-8 items-center justify-center border-r border-[#cbcbcb]">
          <Art x={0} y={0} w={16} h={16}>
            {i === 0 && <path d="M9 11.500H1.500V1.500H12.500V8M4.500 9V7M7 9V4.500M9.500 8V5.500" stroke={G} strokeWidth="1.200" />}
            {i === 1 && <path d="M8 11.500H1.500V1.500H11.500V8M6.500 1.500V11.500M1.500 6.500H11.500" stroke={G} strokeWidth="1.200" />}
            {i === 2 && <path d="M6.500 3L1.500 1.500V10.500L6.500 12M11.500 8V1.500L6.500 3V12" stroke={G} strokeWidth="1.200" />}
            <Plus x={11.500} y={11.500} r={4} s={G} sw={2} />
          </Art>
        </div>
      ))}
    </div>
  );
}

function StatusBar() {
  const v = <div className="h-5 w-px bg-[#cbcbcb]" />;
  return (
    <div className="flex h-5 shrink-0 items-center bg-[#ebebeb] pl-[3px] text-[12px] font-normal text-[#333]">
      <T w={41}>2 marks</T>
      <T w={97} c="ml-[16px]">1 row by 2 columns</T>
      <T w={116} c="ml-[17px]">SUM of CNT(Rank): 50</T>
      <div className="w-[709px]" />
      {v}
      <div className="w-[126px]" />
      {v}
      <div className="w-[26px]" />
      {v}
      <div className="w-[26px]" />
      {v}
      <div className="w-[46px]" />
      {v}
      <Art x={1228} y={708} w={70} h={20}>
        <g fill="#bdbdbd">
          <path d="M1236 714h1.500v7h-1.500zM1242 714V721L1238 717.500ZM1256 714V721L1252.500 717.500ZM1269.500 714V721L1273 717.500ZM1285 714V721L1288.500 717.500ZM1289 714h1.500v7h-1.500z" />
        </g>
      </Art>
      {v}
      <Art x={1299} y={708} w={67} h={20}>
        <path d="M1307 713.500H1318M1307 717.500H1318M1307 721.500H1318" stroke="#bdbdbd" strokeWidth="3" strokeDasharray="3 1" />
        <path d="M1328 712h11v6h-11zM1328 719.500h3v3h-3zM1332 719.500h3v3h-3zM1336 719.500h3v3h-3z" fill="#bdbdbd" />
        <rect x="1349" y="712" width="11" height="11" rx="1" fill="#666" />
      </Art>
    </div>
  );
}

function Taskbar() {
  return (
    <div className="flex h-10 shrink-0 bg-[linear-gradient(90deg,#0b0b0f_0,#0a0b0f_800px,#130d12_850px,#33161f_935px,#2d141f_985px,#231420_1080px,#0f0d13_1190px,#08080b_1366px)] font-['Noto_Sans','Open_Sans',sans-serif] font-normal text-white">
      <Art x={0} y={728} w={48} h={40}>
        <path d="M16 742L22.500 741.200V747.500H16ZM23.500 741L32 740V747.500H23.500ZM16 748.500H22.500V755L16 754.200ZM23.500 748.500H32V756L23.500 755.100Z" fill="#fff" />
      </Art>
      <div className="flex w-[344px] items-center bg-[#f2f2f2] text-[15px] text-[#2a2a2a]">
        <Art x={48} y={728} w={40} h={40}>
          <circle cx="67.800" cy="748" r="9" stroke="#000" strokeWidth="2.800" />
        </Art>
        <T w={128}>Type here to search</T>
        <Art x={216} y={728} w={176} h={40}>
          <path d="M369 740.500h5v10h-5z" stroke="#222" />
          <path d="M368.500 744h6v6.500h-6z" fill="#222" />
          <path d="M366.500 748V752Q366.500 753.500 368 753.500H375Q376.500 753.500 376.500 752V748M371.500 753.500V756.500M369 756.500H374" stroke="#222" strokeWidth="1.200" />
        </Art>
      </div>
      <Art x={392} y={728} w={49} h={40}>
        <path d="M408.500 740V742.500H418.500V740M408.500 755V752.500H418.500V755M408.500 744.500H418.500V750.500H408.500ZM422.500 740V755" stroke="#fff" strokeWidth="1.200" />
        <path d="M421 744.500h3v3h-3z" fill="#fff" stroke="#0b0b0f" strokeWidth=".5" />
      </Art>
      <Art x={441} y={728} w={49} h={40}>
        <path d="M457 747C458 741 462 737.500 467.500 737.500C474 737.500 477.500 742 477 749.500H463.500C464 754 470 755.500 475 752.500V757C467 760.500 459 758 459 750.500C459 747 461 744.500 463.500 743.200C461 743.300 458.500 744.800 457 747ZM463.800 746H471.500C471.500 743.500 470 742.200 467.800 742.200C465.500 742.200 464 743.800 463.800 746Z" fill="#0a79da" />
      </Art>
      <Art x={490} y={728} w={50} h={40}>
        <path d="M504 742h23v14.500q0 .5 -.5 .5h-22q-.5 0 -.5 -.5z" fill="#fff" />
        <path d="M511.500 742V740.500Q511.500 736.500 515 736.500T519 740.500V742M515 738Q517 735 520 737.500T521.500 742" stroke="#ddd" strokeWidth="1.200" />
        <path d="M510 745h5v5h-5z" fill="#f25022" />
        <path d="M516 745h5v5h-5z" fill="#7fba00" />
        <path d="M510 751h5v5h-5z" fill="#00a4ef" />
        <path d="M516 751h5v5h-5z" fill="#ffb900" />
      </Art>
      <Art x={540} y={728} w={49} h={40}>
        <path d="M554 739h10l1 1.500h10v16h-21z" fill="#ffe490" />
        <path d="M554 739h9v3h-9z" fill="#eeb530" />
        <path d="M556.500 739.500h6v1.500h-6z" fill="#fff2b8" />
        <path d="M558 749h14v8h-4v-4h-6v4h-4z" fill="#3fb5e5" />
      </Art>
      <Art x={589} y={728} w={49} h={40}>
        <ellipse cx="614" cy="748" rx="11.200" ry="11.200" fill="#ee2234" />
        <path d="M617 737.500A11.200 11.200 0 0 1 617 758.500Q621.500 754 621.500 748T617 737.500Z" fill="#a80f20" />
        <ellipse cx="614" cy="748" rx="5" ry="8.800" fill="#0b0b0f" />
      </Art>
      <Art x={638} y={728} w={49} h={40}>
        <path d="M651.500 739h14v11h-14zM652 752.500h12v2.500h-12z" fill="#d4d8dc" />
        <path d="M657 736h3v4h2.500l-4 4l-4 -4h2.500z" fill="#1583d8" stroke="#fff" strokeWidth=".6" />
        <path d="M664 744q4 -1.500 6 1v5q0 2 -2 2h-4q-3 0 -3 3h-1q-2 -5 2 -6.500h5v-1h-5q0 -2.500 2 -3.500z" fill="#4a86b8" />
        <path d="M671.500 748.500q4 0 3 5t-4 3.500v1q0 2 -4 2t-4 -2.500q0 -4 3 -4h4q2 -1 2 -5z" fill="#ffdc48" />
      </Art>
      <Art x={687} y={728} w={50} h={40}>
        <path d="M700 745L712 737.500L724 745V757H700Z" fill="#fff" />
        <path d="M701.500 745.500H723L713 749L720 754.500L709 749.800Z" fill="#0b0b0f" />
      </Art>
      <div className="h-10 w-12 border-r-[3px] border-b-2 border-r-[#2c3740] border-b-[#76b9ed] bg-[#3b3c40]">
        <Art x={737} y={728} w={45} h={38}>
          <path d="M749 736.500h22.500v22h-22.500z" fill="#f3f5f7" />
          <Logo x={760.500} y={747.500} k={1.400} mono={["#3f85ae", "#8cb8d2"]} />
        </Art>
      </div>
      <Art x={785} y={728} w={317} h={40} />
      <Art x={1102} y={728} w={38} h={40}>
        <g stroke="#fff" strokeWidth="1.200">
          <circle cx="1108.500" cy="749" r="2.700" />
          <circle cx="1114" cy="743" r="2.900" />
          <path d="M1104.500 755Q1105 752 1108.500 752T1112.500 755M1112 747.500Q1117 745 1118 749.500" />
        </g>
      </Art>
      <Art x={1140} y={728} w={20} h={40}>
        <path d="M1141.500 751L1147 745.500L1152.500 751" stroke="#fff" strokeWidth="1.300" />
      </Art>
      <Art x={1160} y={728} w={24} h={40}>
        <path d="M1164.500 744.500H1177.500V752.500H1164.500Z" stroke="#fff" />
        <path d="M1166 746h10v5h-10zM1178 746.500h1.500v4h-1.500z" fill="#fff" />
      </Art>
      <Art x={1184} y={728} w={29} h={40}>
        <path d="M1187.500 746.500H1190L1193.500 743V753.500L1190 750H1187.500ZM1196 745.500Q1198 748 1196 751M1198.500 743.500Q1202 748 1198.500 753M1201 742Q1205 748 1201 754.500" stroke="#fff" strokeWidth="1.100" />
      </Art>
      <div className="flex w-[23px] items-center text-[12px]">
        <T w={23}>ENG</T>
      </div>
      <div className="ml-[13px] flex w-[58px] flex-col items-center text-[12px] leading-[18px]">
        <T w={27} c="mt-[2px]">16:23</T>
        <T w={58}>15-10-2023</T>
      </div>
      <Art x={1307} y={728} w={59} h={40}>
        <path d="M1325 740h16v13h-5.500l-2.500 3l-2.500 -3h-5.500z" fill="#fff" />
        <path d="M1328 743.500H1338M1328 746.500H1338M1328 749.500H1335" stroke="#111" />
        <path d="M1361.500 728V768" stroke="#55555a" />
      </Art>
    </div>
  );
}

export default function App() {
  return (
    <div className="relative flex h-[768px] w-[1366px] flex-col overflow-hidden bg-[#f5f5f5] font-['Roboto','Noto_Sans',sans-serif] font-light">
      <div className="flex h-[43px] shrink-0 flex-col bg-white font-['Noto_Sans','Open_Sans',sans-serif] text-[12px] font-normal text-black">
        <div className="flex h-6 items-center">
          <Art x={0} y={0} w={23} h={24}>
            <path d="M3 4h14.500v14.500h-14.500z" fill="#eef2f4" />
            <path d="M17.500 4V18.500H3" stroke="#aaa" />
            <Logo x={9.500} y={10.500} k={0.850} mono={["#2f7fab", "#4f97bd"]} />
          </Art>
          <T w={125}>Tableau Public - BOOK1</T>
          <Art x={1236} y={0} w={130} h={24} c="ml-auto">
            <path d="M1245 10.500H1255M1290.500 7.500H1297.500V14.500H1290.500ZM1292.500 7V5.500H1299.500V12.500H1298M1336 5.500L1346 15M1346 5.500L1336 15" stroke="#111" strokeWidth="1.100" />
          </Art>
        </div>
        <div className="flex h-[19px] items-center gap-4 pl-2">
          {menus.map(([n, w]) => (
            <T key={n} w={w}>{n}</T>
          ))}
        </div>
      </div>
      <Toolbar />
      <div className="flex h-[593px] shrink-0">
        <DataPane />
        <Cards />
        <div className="ml-[6px] flex flex-1 flex-col gap-[6px]">
          <Shelf
            n="Columns" w={49}
            icon={
              <Art x={0} y={0} w={12} h={13}>
                <path d="M2 0V12M6 0V12M10 0V12" stroke="#555" strokeWidth="2" />
                <path d="M0 2.500H12" stroke="#fafafa" />
              </Art>
            }
          >
            <Pill c="w-[148px] bg-[#4996b2]" w={82}>Brand channel</Pill>
          </Shelf>
          <Shelf
            n="Rows" w={30}
            icon={
              <Art x={0} y={0} w={12} h={11}>
                <path d="M0 1H12M0 5H12M0 9H12" stroke="#555" strokeWidth="2" />
                <path d="M2.500 0V11" stroke="#fafafa" />
              </Art>
            }
          >
            <Pill c="w-[148px] bg-[#00b180]" w={64}>CNT(Rank)</Pill>
          </Shelf>
          <div className="flex h-[519px] w-[824px] shrink-0 flex-col border border-[#b0b0b0] bg-[#f5ead8]">
            <div className="flex h-[45px] shrink-0 items-center justify-center pt-[4px] font-['Noto_Sans',sans-serif] text-[19px] font-semibold text-[#333]">
              <T w={293}>N0 OF CHANNELS WITH BRAND</T>
            </div>
            <Chart />
          </div>
        </div>
      </div>
      <Tabs />
      <StatusBar />
      <Taskbar />
      <ShowMe />
    </div>
  );
}
